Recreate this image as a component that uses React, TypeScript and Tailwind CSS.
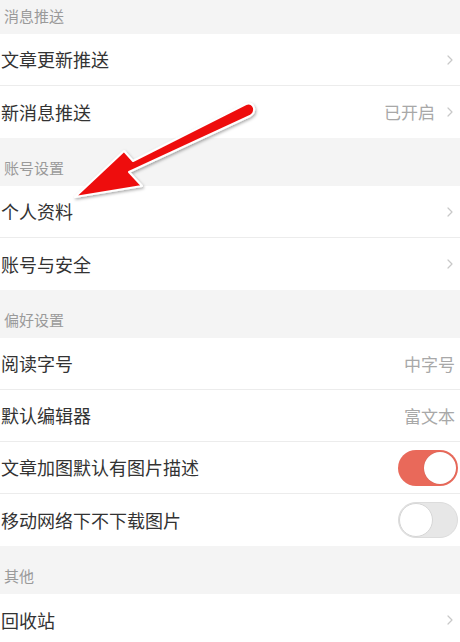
import React from "react";

type Row = {
  label: string;
  value?: string;
  chevron?: boolean;
  toggle?: boolean;
};

type Section = {
  title: string;
  first?: boolean;
  rows: Row[];
};

const sections: Section[] = [
  {
    title: "消息推送",
    first: true,
    rows: [
      { label: "文章更新推送", chevron: true },
      { label: "新消息推送", value: "已开启", chevron: true },
    ],
  },
  {
    title: "账号设置",
    rows: [
      { label: "个人资料", chevron: true },
      { label: "账号与安全", chevron: true },
    ],
  },
  {
    title: "偏好设置",
    rows: [
      { label: "阅读字号", value: "中字号" },
      { label: "默认编辑器", value: "富文本" },
      { label: "文章加图默认有图片描述", toggle: true },
      { label: "移动网络下不下载图片", toggle: false },
    ],
  },
  {
    title: "其他",
    rows: [{ label: "回收站", chevron: true }],
  },
];

const font = {
  fontFamily: '"Noto Sans CJK SC", "Noto Sans", sans-serif',
};

function Chevron() {
  return (
    <svg width="6" height="10" viewBox="0 0 6 10" className="ml-[12px] mr-[7px]">
      <polyline
        points="1,1 5,5 1,9"
        fill="none"
        stroke="#c8c8c8"
        strokeWidth="1.2"
        strokeLinecap="round"
        strokeLinejoin="round"
      />
    </svg>
  );
}

function Toggle({ on }: { on: boolean }) {
  if (on) {
    return (
      <div className="mr-[2px] flex h-[36px] w-[60px] items-center justify-end rounded-full bg-[#e9695a] px-[2px]">
        <div className="h-[32px] w-[32px] rounded-full bg-white shadow-[0_0_1px_rgba(0,0,0,0.2)]" />
      </div>
    );
  }
  return (
    <div className="mr-[2px] flex h-[36px] w-[60px] items-center rounded-full border border-[#dcdcdc] bg-[#e7e7e7]">
      <div className="h-[34px] w-[34px] rounded-full border border-[#d6d6d6] bg-white" />
    </div>
  );
}

function SettingRow({ row, last }: { row: Row; last: boolean }) {
  return (
    <div
      className={
        "flex h-[52px] items-center bg-white " +
        (last ? "" : "border-b border-[#ececec]")
      }
    >
      <div className="flex-1 pl-[1px] text-[18px] text-[#333333]">{row.label}</div>
      {row.value && (
        <div className={"text-[17px] text-[#a8a8a8] " + (row.chevron ? "" : "mr-[5px]")}>
          {row.value}
        </div>
      )}
      {row.chevron && <Chevron />}
      {row.toggle !== undefined && <Toggle on={row.toggle} />}
    </div>
  );
}

function Arrow() {
  return (
    <svg
      className="pointer-events-none absolute left-0 top-0"
      width="460"
      height="642"
      viewBox="0 0 460 642"
    >
      <defs>
        <filter id="sh" x="-10%" y="-10%" width="120%" height="120%">
          <feDropShadow dx="1" dy="1.5" stdDeviation="1.5" floodColor="#000" floodOpacity="0.35" />
        </filter>
      </defs>
      <path
        d="M75,197 L124,151 L133,161 L246,104 Q252,102 254,108 Q255,113 250,116 L129,172 L142,186 Z"
        fill="#ee1111"
        stroke="#ffffff"
        strokeWidth="2"
        strokeLinejoin="round"
        filter="url(#sh)"
      />
    </svg>
  );
}

export default function App() {
  return (
    <div className="relative h-[642px] w-[460px] overflow-hidden bg-[#f4f4f4]" style={font}>
      {sections.map((s) => (
        <div key={s.title}>
          <div
            className={
              "flex items-end pb-[7px] pl-[4px] text-[15px] text-[#9a9a9a] " +
              (s.first ? "h-[34px]" : "h-[48px]")
            }
          >
            {s.title}
          </div>
          {s.rows.map((r, i) => (
            <SettingRow key={r.label} row={r} last={i === s.rows.length - 1} />
          ))}
        </div>
      ))}
      <Arrow />
    </div>
  );
}
